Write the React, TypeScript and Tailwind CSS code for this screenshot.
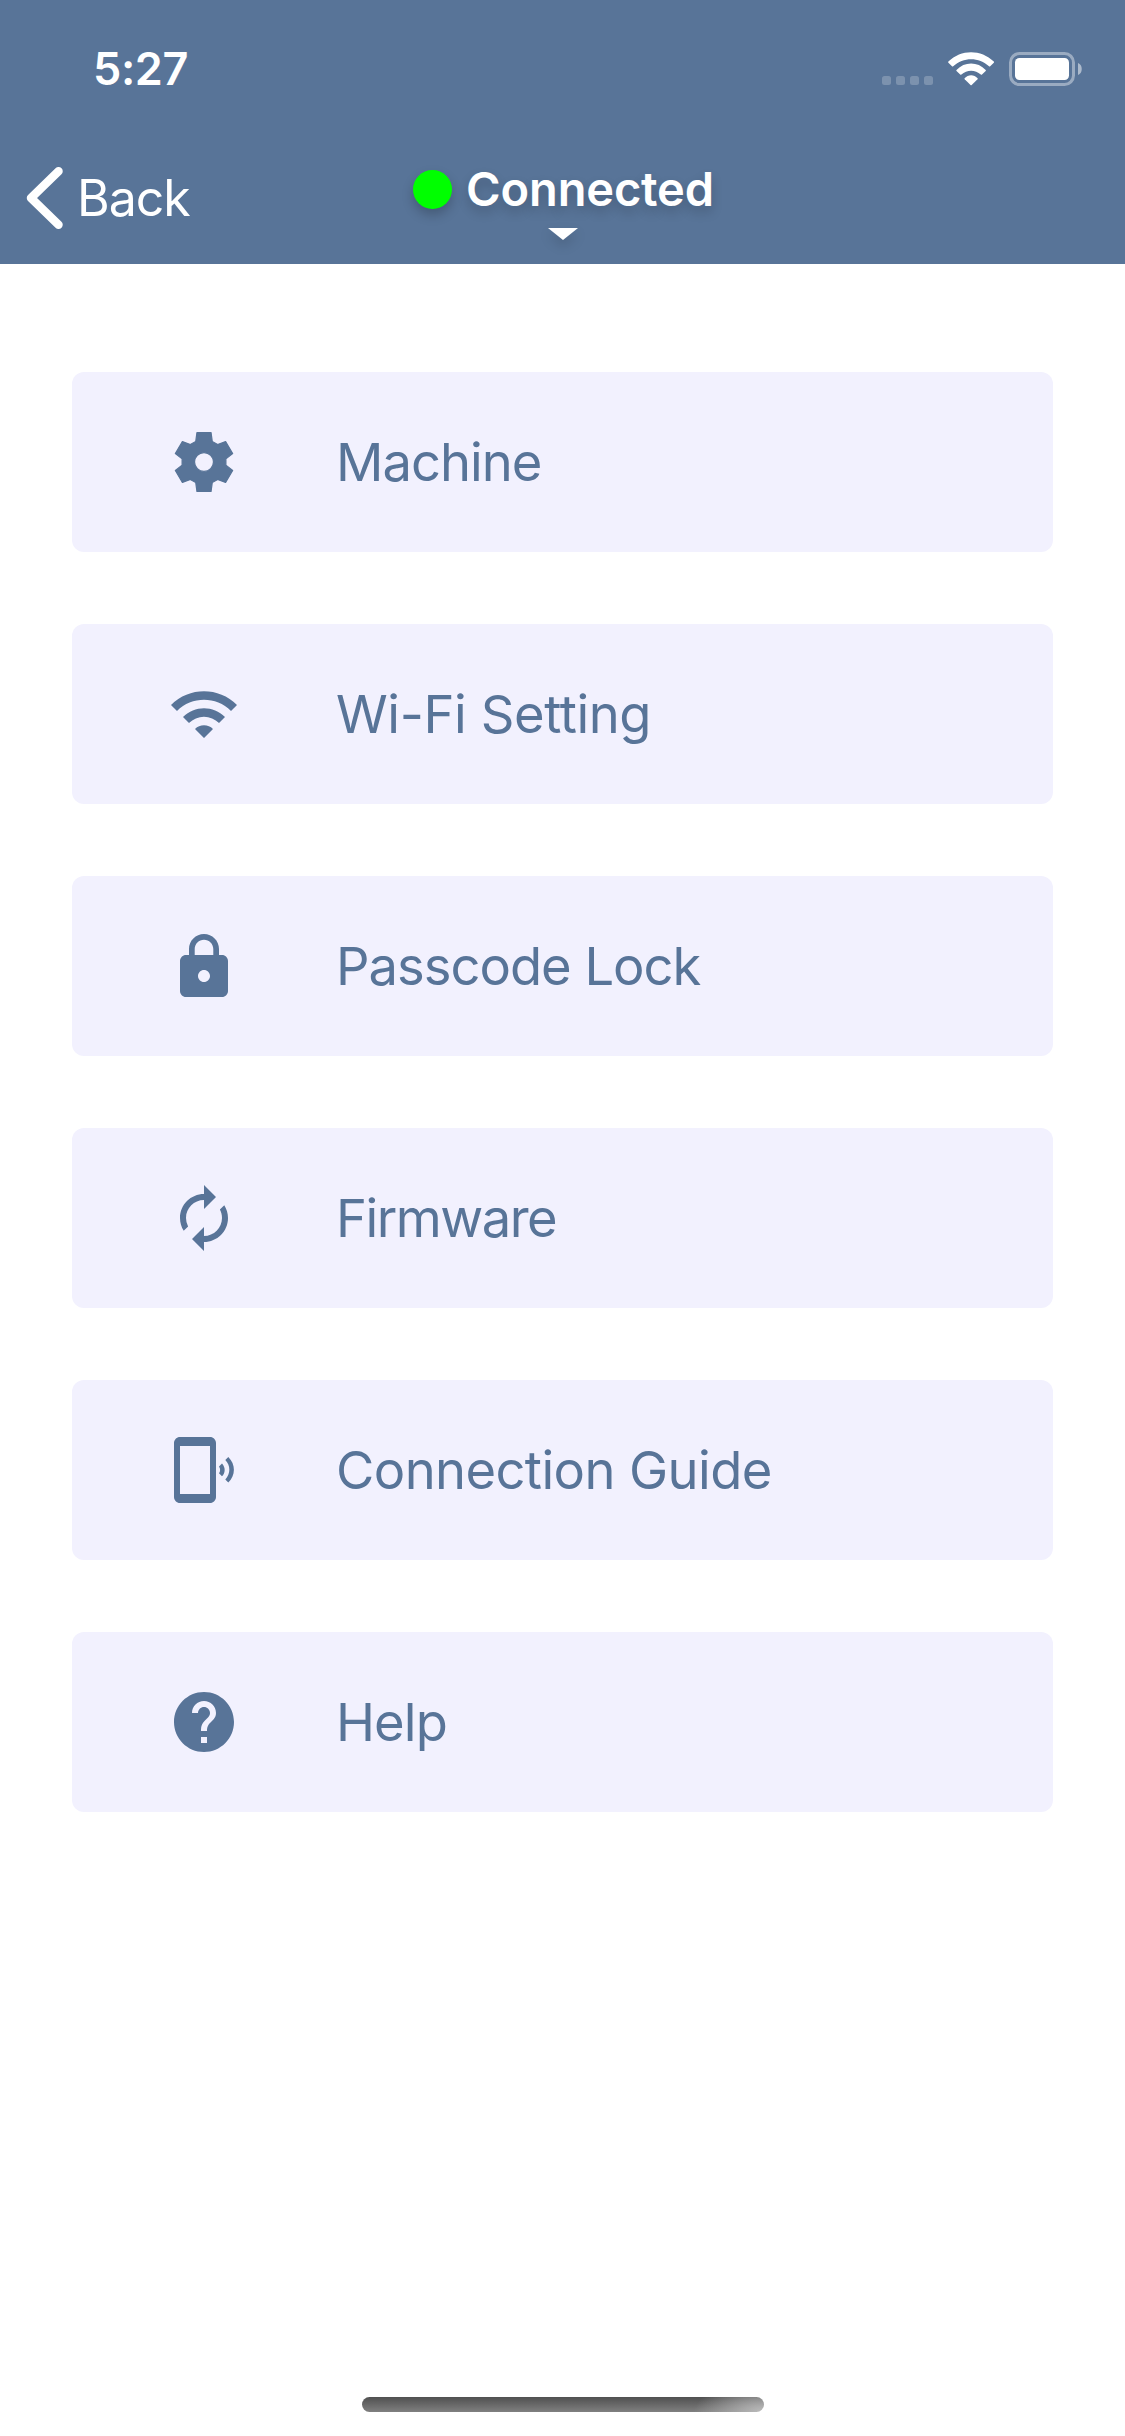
import { MdWifi, MdLock, MdAutorenew, MdHelp } from "react-icons/md";
import type { ReactNode } from "react";

function Gear() {
  return (
    <svg viewBox="0 0 24 24" className="size-[72px]" fill="currentColor" stroke="currentColor" strokeWidth="0.4" strokeLinejoin="round">
      <path d="M9.65 2.2H14.35L14.75 5.15L16.55 6.2L19.2 5.2L21.55 9.15L19.3 10.95V13.05L21.55 14.85L19.2 18.8L16.55 17.8L14.75 18.85L14.35 21.8H9.65L9.25 18.85L7.45 17.8L4.8 18.8L2.45 14.85L4.7 13.05V10.95L2.45 9.15L4.8 5.2L7.45 6.2L9.25 5.15ZM12 8.85A3.15 3.15 0 1 0 12 15.15A3.15 3.15 0 1 0 12 8.85Z" fillRule="evenodd" />
    </svg>
  );
}

function PhoneSignal() {
  return (
    <svg viewBox="0 0 24 24" className="size-[72px]" fill="currentColor">
      <path d="M20.1 7.7l-1 1c1.8 1.8 1.8 4.6 0 6.5l1 1c2.5-2.3 2.5-6.1 0-8.5zM18 9.8l-1 1c.5.7.5 1.6 0 2.3l1 1c1.2-1.2 1.2-3 0-4.3zM14 1H4c-1.1 0-2 .9-2 2v18c0 1.1.9 2 2 2h10c1.1 0 2-.9 2-2V3c0-1.1-.9-2-2-2zm0 19H4V4h10v16z" />
    </svg>
  );
}

const items: { label: string; tracking: string; icon: ReactNode }[] = [
  { label: "Machine", tracking: "tracking-[-1px]", icon: <Gear /> },
  { label: "Wi-Fi Setting", tracking: "tracking-[-0.4px]", icon: <MdWifi className="size-[72px]" /> },
  { label: "Passcode Lock", tracking: "tracking-[-1px]", icon: <MdLock className="mt-px size-[72px]" /> },
  { label: "Firmware", tracking: "tracking-[-1.5px]", icon: <MdAutorenew className="size-[72px]" /> },
  { label: "Connection Guide", tracking: "tracking-[-0.6px]", icon: <PhoneSignal /> },
  { label: "Help", tracking: "tracking-[-0.9px]", icon: <MdHelp className="size-[72px]" /> },
];

function StatusIcons() {
  return (
    <svg viewBox="0 0 202 36" className="h-9 w-[202px]">
      <g fill="#fff" fillOpacity="0.22">
        <rect x="0" y="24" width="9" height="9" rx="2.5" />
        <rect x="14" y="24" width="9" height="9" rx="2.5" />
        <rect x="28" y="24" width="9" height="9" rx="2.5" />
        <rect x="42" y="24" width="9" height="9" rx="2.5" />
      </g>
      <g fill="#fff">
        <path d="M66.4 9.6C79 -3 99 -3 111.8 9.6Q112.3 10.2 111.8 10.7L108.2 14.2Q107.6 14.7 107 14.2C97 4.8 81.2 4.8 71.2 14.2Q70.6 14.7 70 14.2L66.4 10.7Q65.9 10.2 66.4 9.6Z" />
        <path d="M74.5 17.9C82.5 9.3 95.7 9.3 103.7 17.9Q104.2 18.5 103.7 19L100 22.6Q99.4 23.1 98.8 22.6C93.3 17.4 84.9 17.4 79.4 22.6Q78.8 23.1 78.2 22.6L74.5 19Q74 18.5 74.5 17.9Z" />
        <path d="M82.6 26.2C86.2 22.3 92 22.3 95.6 26.2Q96 26.8 95.5 27.3L89.7 32.9Q89.1 33.4 88.5 32.9L82.7 27.3Q82.2 26.8 82.6 26.2Z" />
      </g>
      <rect x="128.5" y="1.5" width="63" height="31" rx="9" fill="none" stroke="#fff" strokeOpacity="0.4" strokeWidth="3" />
      <rect x="133" y="6" width="54" height="22" rx="4.5" fill="#fff" />
      <path d="M196 11c5 1.5 5 10.5 0 12z" fill="#fff" fillOpacity="0.5" />
    </svg>
  );
}

export default function App() {
  return (
    <div className="flex h-[2436px] w-[1125px] flex-col bg-white font-['Inter',sans-serif]">
      <header className="flex h-[264px] flex-col bg-[#587498] text-white">
        <div className="flex h-[132px] items-start justify-between pr-[41px] pl-[93px] pt-[52px]">
          <span className="-mt-[10px] text-[45px] leading-[54px] font-semibold tracking-[-0.4px]">5:27</span>
          <StatusIcons />
        </div>
        <div className="grid h-[132px] grid-cols-[375px_375px_375px]">
          <div className="flex items-center pl-[26px]">
            <svg viewBox="0 0 38 64" className="h-16 w-[38px]" fill="none" stroke="#fff" strokeWidth="8.5" strokeLinecap="round" strokeLinejoin="round">
              <path d="M32.5 5.2L5 32L32.5 58.8" />
            </svg>
            <span className="ml-[13px] text-[50px] leading-[60px] tracking-[-1px]">Back</span>
          </div>
          <div className="flex flex-col items-center pt-[28px]">
            <div className="flex items-center pl-0.5">
              <span className="mr-[14px] size-[39px] rounded-full bg-[#00ff00] shadow-[0_6px_12px_rgba(0,0,0,0.22)]" />
              <span className="text-[47px] leading-[58px] font-semibold tracking-[-0.15px] [text-shadow:0_6px_12px_rgba(0,0,0,0.2)]">Connected</span>
            </div>
            <svg viewBox="0 0 30 12" className="mt-[10px] h-3 w-[30px] overflow-visible drop-shadow-[0_6px_6px_rgba(0,0,0,0.15)]">
              <path d="M0 0h30L15 12z" fill="#fff" />
            </svg>
          </div>
        </div>
      </header>
      <main className="flex flex-1 flex-col gap-[72px] px-[72px] pt-[108px]">
        {items.map((item) => (
          <button key={item.label} className="flex h-[180px] items-center rounded-[12px] bg-[#f2f1fe] pl-24 text-[#587498]">
            <span className="mr-24 size-[72px]">{item.icon}</span>
            <span className={`text-[52.5px] leading-[64px] ${item.tracking}`}>{item.label}</span>
          </button>
        ))}
      </main>
      <div className="mb-6 h-[15px] w-[402px] self-center rounded-full bg-[radial-gradient(70px_30px_at_100%_100%,#bcbcbc,transparent),linear-gradient(to_bottom,#505050,#808080)]" />
    </div>
  );
}
